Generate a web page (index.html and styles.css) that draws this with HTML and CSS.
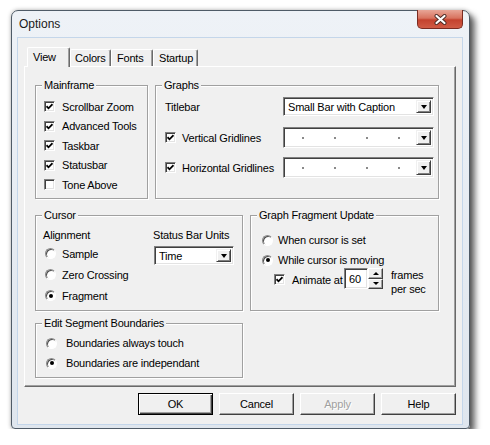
FILE: index.html
```html
<!DOCTYPE html>
<html>
<head>
<meta charset="utf-8">
<title>Options</title>
<link rel="stylesheet" href="styles.css">
</head>
<body>
<div class="window">
  <div class="titlebar">
    <span class="title">Options</span>
    <div class="close">
      <svg width="13" height="11" viewBox="0 0 13 11">
        <path d="M2.5 2 L10.5 9 M10.5 2 L2.5 9" stroke="#4a2a24" stroke-width="4" stroke-linecap="round"/>
        <path d="M2.5 2 L10.5 9 M10.5 2 L2.5 9" stroke="#fff" stroke-width="2.2" stroke-linecap="round"/>
      </svg>
    </div>
  </div>
  <div class="client">
    <div class="tabs">
      <div class="tab active t-view">View</div>
      <div class="tab t-colors">Colors</div>
      <div class="tab t-fonts">Fonts</div>
      <div class="tab t-startup">Startup</div>
    </div>
    <div class="panel">
      <div class="row row-a">
        <div class="group g-main">
          <div class="legend">Mainframe</div>
          <div class="body mf">
            <div class="opt"><span class="cb"><svg width="7" height="7" viewBox="0 0 7 7"><path d="M0.5 3.2 L2.5 5.3 L6.5 1.2" stroke="#000" stroke-width="1.8" fill="none"/></svg></span>Scrollbar Zoom</div>
            <div class="opt"><span class="cb"><svg width="7" height="7" viewBox="0 0 7 7"><path d="M0.5 3.2 L2.5 5.3 L6.5 1.2" stroke="#000" stroke-width="1.8" fill="none"/></svg></span>Advanced Tools</div>
            <div class="opt"><span class="cb"><svg width="7" height="7" viewBox="0 0 7 7"><path d="M0.5 3.2 L2.5 5.3 L6.5 1.2" stroke="#000" stroke-width="1.8" fill="none"/></svg></span>Taskbar</div>
            <div class="opt"><span class="cb"><svg width="7" height="7" viewBox="0 0 7 7"><path d="M0.5 3.2 L2.5 5.3 L6.5 1.2" stroke="#000" stroke-width="1.8" fill="none"/></svg></span>Statusbar</div>
            <div class="opt"><span class="cb"></span>Tone Above</div>
          </div>
        </div>
        <div class="group g-graphs">
          <div class="legend">Graphs</div>
          <div class="body gr">
            <div class="line l1">
              <div class="lbl">Titlebar</div>
              <div class="combo c-title"><div class="val">Small Bar with Caption</div><div class="arrow"></div></div>
            </div>
            <div class="line l2">
              <div class="lbl"><span class="cb"><svg width="7" height="7" viewBox="0 0 7 7"><path d="M0.5 3.2 L2.5 5.3 L6.5 1.2" stroke="#000" stroke-width="1.8" fill="none"/></svg></span>Vertical Gridlines</div>
              <div class="combo c-grid"><div class="val dots"><i></i><i></i><i></i><i></i></div><div class="arrow"></div></div>
            </div>
            <div class="line l3">
              <div class="lbl"><span class="cb"><svg width="7" height="7" viewBox="0 0 7 7"><path d="M0.5 3.2 L2.5 5.3 L6.5 1.2" stroke="#000" stroke-width="1.8" fill="none"/></svg></span>Horizontal Gridlines</div>
              <div class="combo c-grid"><div class="val dots"><i></i><i></i><i></i><i></i></div><div class="arrow"></div></div>
            </div>
          </div>
        </div>
      </div>
      <div class="row row-b">
        <div class="group g-cursor">
          <div class="legend">Cursor</div>
          <div class="body cu">
            <div class="col1">
              <div class="hdr">Alignment</div>
              <div class="ropt"><span class="rb"></span>Sample</div>
              <div class="ropt"><span class="rb"></span>Zero Crossing</div>
              <div class="ropt"><span class="rb on"></span>Fragment</div>
            </div>
            <div class="col2">
              <div class="hdr">Status Bar Units</div>
              <div class="combo c-time"><div class="val">Time</div><div class="arrow"></div></div>
            </div>
          </div>
        </div>
        <div class="group g-gfu">
          <div class="legend">Graph Fragment Update</div>
          <div class="body gfu">
            <div class="ropt"><span class="rb"></span>When cursor is set</div>
            <div class="ropt"><span class="rb on"></span>While cursor is moving</div>
            <div class="anim">
              <span class="cb"><svg width="7" height="7" viewBox="0 0 7 7"><path d="M0.5 3.2 L2.5 5.3 L6.5 1.2" stroke="#000" stroke-width="1.8" fill="none"/></svg></span>
              <span class="anim-lbl">Animate at</span>
              <div class="spin">
                <div class="edit">60</div>
                <div class="spinbtns"><div class="sb up"></div><div class="sb down"></div></div>
              </div>
              <div class="fps">frames<br>per sec</div>
            </div>
          </div>
        </div>
      </div>
      <div class="row row-c">
        <div class="group g-edit">
          <div class="legend">Edit Segment Boundaries</div>
          <div class="body es">
            <div class="ropt"><span class="rb"></span>Boundaries always touch</div>
            <div class="ropt"><span class="rb on"></span>Boundaries are independant</div>
          </div>
        </div>
      </div>
    </div>
    <div class="buttons">
      <div class="btn default">OK</div>
      <div class="btn">Cancel</div>
      <div class="btn disabled">Apply</div>
      <div class="btn">Help</div>
    </div>
  </div>
</div>
</body>
</html>
```
FILE: styles.css
```css
body {
  margin: 0;
  background: #fff;
  font-family: "Liberation Sans", Arial, sans-serif;
  font-size: 11px;
  letter-spacing: -0.2px;
  color: #000;
}

.window {
  box-sizing: border-box;
  width: 459px;
  height: 419px;
  margin: 10px 0 0 11px;
  border: 1px solid #4f5b67;
  border-radius: 7px 7px 4px 4px;
  background: linear-gradient(#eef2f7, #dfe6ee);
  box-shadow: 5px 5px 6px rgba(0, 0, 0, 0.6), 0 0 4px rgba(0, 0, 0, 0.3);
  padding: 0 7px 4px 6px;
  display: flex;
  flex-direction: column;
}

.titlebar {
  height: 27px;
  flex: none;
  display: flex;
  align-items: flex-start;
}

.title {
  margin: 6px 0 0 1px;
  font-size: 12px;
  line-height: 14px;
  letter-spacing: 0;
  color: #1a1a1a;
}

.close {
  margin: -1px -1px 0 auto;
  width: 46px;
  height: 19px;
  box-sizing: border-box;
  border: 1px solid #7a2b21;
  border-top: none;
  border-radius: 0 0 5px 5px;
  background: linear-gradient(#e8a697, #d8735f 45%, #c4422e 55%, #d05b45);
  display: flex;
  align-items: center;
  justify-content: center;
}

.client {
  width: 444px;
  height: 386px;
  box-sizing: border-box;
  background: #f0f0f0;
  box-shadow: 0 0 0 1px #c4d6ea;
  display: flex;
  flex-direction: column;
}

/* tabs */
.tabs {
  display: flex;
  align-items: flex-end;
  height: 20px;
  margin: 9px 0 -1px 0;
  padding-left: 9px;
  position: relative;
  z-index: 1;
}

.tab {
  height: 17px;
  margin-bottom: 1px;
  box-sizing: border-box;
  border: 1px solid;
  border-color: #fff #6a6a6a transparent #fff;
  border-bottom: none;
  border-radius: 2px 2px 0 0;
  box-shadow: inset -1px 0 #a0a0a0;
  background: #f0f0f0;
  display: flex;
  align-items: center;
  padding-left: 5px;
}

.tab.active {
  height: 20px;
  margin-bottom: 0;
  padding-bottom: 2px;
}

.t-view { width: 43px; }
.t-colors { width: 41px; padding-left: 4px; }
.t-fonts { width: 42px; }
.t-startup { width: 45px; }

/* panel */
.panel {
  margin-left: 6px;
  width: 432px;
  height: 321px;
  flex: none;
  box-sizing: border-box;
  border: 1px solid;
  border-color: #fff #696969 #696969 #fff;
  box-shadow: inset -1px -1px #a0a0a0;
  padding: 18px 0 0 10px;
}

.row {
  display: flex;
  gap: 7px;
}

.row-a { height: 114px; }
.row-b { height: 96px; margin-top: 16px; }
.row-c { height: 55px; margin-top: 12px; }

.group {
  box-sizing: border-box;
  border: 1px solid #a0a0a0;
  box-shadow: 1px 1px 0 #fff, inset 1px 1px 0 #fff;
}

.g-main { width: 113px; }
.g-graphs { width: 284px; }
.g-cursor { width: 208px; }
.g-gfu { width: 189px; }
.g-edit { width: 208px; }

.legend {
  width: max-content;
  margin: -8px 0 -6px 6px;
  padding: 0 2px;
  height: 14px;
  line-height: 14px;
  background: #f0f0f0;
  position: relative;
}

.opt, .ropt {
  display: flex;
  align-items: center;
  gap: 6px;
  white-space: nowrap;
}

/* checkbox */
.cb {
  flex: none;
  width: 11px;
  height: 11px;
  box-sizing: border-box;
  border: 1px solid;
  border-color: #808080 #fff #fff #808080;
  box-shadow: inset 1px 1px #404040, inset -1px -1px #e3e3e3;
  background: #fff;
  display: flex;
  align-items: center;
  justify-content: center;
}

.cb svg { display: block; }

/* radio */
.rb {
  flex: none;
  width: 11px;
  height: 11px;
  box-sizing: border-box;
  border-radius: 50%;
  border: 1px solid;
  border-color: #8a8a8a #fff #fff #8a8a8a;
  box-shadow: inset 1px 1px #505050;
  background: #fff;
  display: flex;
  align-items: center;
  justify-content: center;
}

.rb.on::after {
  content: "";
  width: 4px;
  height: 4px;
  border-radius: 50%;
  background: #000;
}

/* combo */
.combo {
  box-sizing: border-box;
  border: 1px solid;
  border-color: #808080 #fff #fff #808080;
  box-shadow: inset 1px 1px #404040, inset -1px -1px #e3e3e3;
  background: #fff;
  display: flex;
  padding: 2px;
}

.combo .val {
  flex: 1;
  display: flex;
  align-items: center;
  padding-left: 2px;
  white-space: nowrap;
}

.combo .arrow {
  width: 15px;
  box-sizing: border-box;
  border: 1px solid;
  border-color: #f0f0f0 #404040 #404040 #f0f0f0;
  box-shadow: inset 1px 1px #fff, inset -1px -1px #808080;
  background: #f0f0f0;
  display: flex;
  align-items: center;
  justify-content: center;
}

.combo .arrow::after {
  content: "";
  border-left: 3.5px solid transparent;
  border-right: 3.5px solid transparent;
  border-top: 4px solid #000;
}

.dots {
  gap: 30px;
}

.combo .dots { padding-left: 16px; }

.dots i {
  width: 2px;
  height: 2px;
  background: #8a8a8a;
}

/* mainframe */
.mf { padding: 11px 0 0 8px; }
.mf .opt { height: 19.5px; gap: 7px; }

/* graphs */
.gr { padding: 11px 0 0 9px; }
.gr .line { display: flex; align-items: center; }
.gr .lbl { width: 118px; display: flex; align-items: center; gap: 6px; white-space: nowrap; }
.gr .l1 { height: 19px; }
.gr .l2 { height: 21px; margin-top: 11px; }
.gr .l3 { height: 21px; margin-top: 9px; }
.c-title { width: 151px; height: 19px; }
.c-grid { width: 151px; height: 21px; }

/* cursor */
.cu { padding: 11px 0 0 7px; display: flex; }
.cu .col1 { width: 110px; }
.cu .hdr { height: 16px; display: flex; align-items: center; white-space: nowrap; }
.cu .ropt { height: 21px; padding-left: 2px; }
.c-time { width: 80px; height: 19px; margin: 3px 0 0 1px; }

/* graph fragment update */
.gfu { padding: 14px 0 0 11px; }
.gfu .ropt { height: 20px; gap: 5px; }
.anim {
  display: flex;
  align-items: flex-start;
  margin-top: -2px;
  padding-left: 12px;
}
.anim .cb { margin-top: 6px; }
.anim-lbl { width: 52px; margin: 5px 0 0 7px; line-height: 14px; white-space: nowrap; }
.spin { display: flex; }
.spin .edit {
  width: 24px;
  height: 21px;
  box-sizing: border-box;
  border: 1px solid;
  border-color: #808080 #fff #fff #808080;
  box-shadow: inset 1px 1px #404040, inset -1px -1px #e3e3e3;
  background: #fff;
  display: flex;
  align-items: center;
  padding-left: 4px;
}
.spinbtns {
  width: 15px;
  height: 21px;
  display: flex;
  flex-direction: column;
}
.sb {
  flex: 1;
  box-sizing: border-box;
  border: 1px solid;
  border-color: #fff #404040 #404040 #fff;
  box-shadow: inset -1px -1px #a0a0a0;
  background: #f0f0f0;
  display: flex;
  align-items: center;
  justify-content: center;
}
.sb.up::after {
  content: "";
  border-left: 3px solid transparent;
  border-right: 3px solid transparent;
  border-bottom: 3px solid #000;
}
.sb.down::after {
  content: "";
  border-left: 3px solid transparent;
  border-right: 3px solid transparent;
  border-top: 3px solid #000;
}
.fps { margin-left: 8px; line-height: 14px; }

/* edit segment */
.es { padding: 9px 0 0 10px; }
.es .ropt { height: 20px; gap: 9px; }

/* buttons */
.buttons {
  display: flex;
  justify-content: flex-end;
  gap: 6px;
  margin-top: 6px;
  padding-right: 6px;
}

.btn {
  width: 75px;
  height: 22px;
  box-sizing: border-box;
  border: 1px solid;
  border-color: #fff #404040 #404040 #fff;
  box-shadow: inset -1px -1px #a0a0a0;
  background: #f0f0f0;
  display: flex;
  align-items: center;
  justify-content: center;
}

.btn.default {
  border-color: #000;
  box-shadow: inset 1px 1px #fff, inset -1px -1px #404040, inset -2px -2px #a0a0a0;
}

.btn.disabled {
  color: #a0a0a0;
  text-shadow: 1px 1px #fff;
}
```
